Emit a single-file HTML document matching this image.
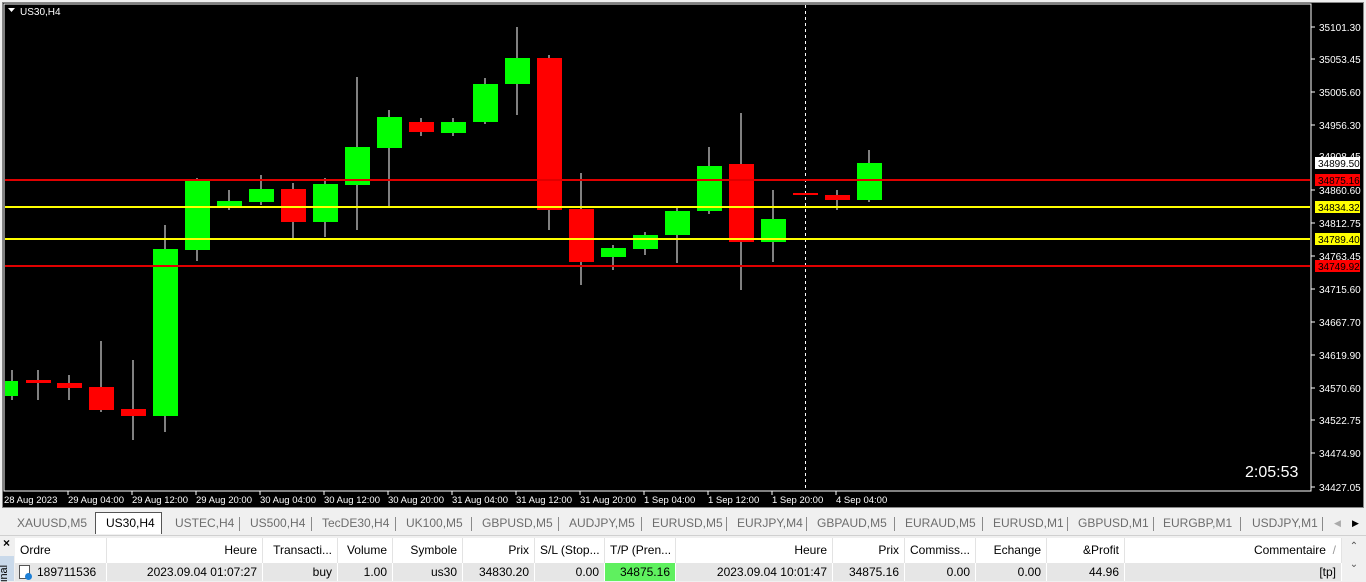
<!DOCTYPE html>
<html><head><meta charset="utf-8"><style>
*{margin:0;padding:0;box-sizing:border-box}
body{width:1366px;height:581px;overflow:hidden;background:#f0f0f0;font-family:"Liberation Sans",sans-serif;position:relative}
.abs{position:absolute}
.tab{position:absolute;top:516px;font-size:12px;color:#6d6d6d;white-space:nowrap}
.sep{position:absolute;top:517px;width:1px;height:14px;background:#8a8a8a}
.hd{position:absolute;top:538px;height:25px;background:#fff;border-right:1px solid #e3e3e3;font-size:12px;color:#000;line-height:24px;padding:0 5px;white-space:nowrap;overflow:hidden}
.cl{position:absolute;top:563px;height:18px;background:#e6e6e6;border-right:1px solid #fff;font-size:12px;color:#000;line-height:18px;padding:0 5px;white-space:nowrap;overflow:hidden}
.r{text-align:right}
</style></head><body>
<div class="abs" style="left:2px;top:2px;width:1362px;height:506px;background:#000;border:1px solid #888"></div>
<svg class="abs" style="left:0;top:0" width="1366" height="510" xmlns="http://www.w3.org/2000/svg">
<rect x="4" y="4" width="1307" height="487" fill="none" stroke="#fff" stroke-width="1"/>
<g fill="#fff" font-family="Liberation Sans" font-size="10">
<text x="20" y="15">US30,H4</text>
<path d="M8 8h7l-3.5 4z" fill="#fff"/>
</g>
<g stroke="#fff" stroke-width="1">
<line x1="805.5" y1="5" x2="805.5" y2="490" stroke-dasharray="3,3"/>
</g>
<g stroke="#fff" stroke-width="1" id="wicks">
<line x1="12" y1="370" x2="12" y2="400"/><line x1="38" y1="370" x2="38" y2="400"/><line x1="69" y1="375" x2="69" y2="400"/>
<line x1="101" y1="341" x2="101" y2="412"/><line x1="133" y1="360" x2="133" y2="440"/><line x1="165" y1="225" x2="165" y2="432"/>
<line x1="197" y1="178" x2="197" y2="261"/><line x1="229" y1="190" x2="229" y2="210"/><line x1="261" y1="175" x2="261" y2="205"/>
<line x1="293" y1="183" x2="293" y2="240"/><line x1="325" y1="178" x2="325" y2="237"/><line x1="357" y1="77" x2="357" y2="230"/>
<line x1="389" y1="110" x2="389" y2="207"/><line x1="421" y1="118" x2="421" y2="136"/><line x1="453" y1="118" x2="453" y2="136"/>
<line x1="485" y1="78" x2="485" y2="124"/><line x1="517" y1="27" x2="517" y2="115"/><line x1="549" y1="55" x2="549" y2="230"/>
<line x1="581" y1="173" x2="581" y2="285"/><line x1="613" y1="245" x2="613" y2="270"/><line x1="645" y1="232" x2="645" y2="255"/>
<line x1="677" y1="208" x2="677" y2="263"/><line x1="709" y1="147" x2="709" y2="214"/><line x1="741" y1="113" x2="741" y2="290"/>
<line x1="773" y1="190" x2="773" y2="262"/><line x1="837" y1="190" x2="837" y2="210"/><line x1="869" y1="150" x2="869" y2="202"/>
</g>
<g fill="#00ff00">
<rect x="5" y="381" width="13" height="15"/><rect x="153" y="249" width="25" height="167"/><rect x="185" y="181" width="25" height="69"/>
<rect x="217" y="201" width="25" height="6"/><rect x="249" y="189" width="25" height="13"/><rect x="313" y="184" width="25" height="38"/>
<rect x="345" y="147" width="25" height="38"/><rect x="377" y="117" width="25" height="31"/><rect x="441" y="122" width="25" height="11"/>
<rect x="473" y="84" width="25" height="38"/><rect x="505" y="58" width="25" height="26"/><rect x="601" y="248" width="25" height="9"/>
<rect x="633" y="235" width="25" height="14"/><rect x="665" y="211" width="25" height="24"/><rect x="697" y="166" width="25" height="45"/>
<rect x="761" y="219" width="25" height="23"/><rect x="857" y="163" width="25" height="37"/>
</g>
<g fill="#ff0000">
<rect x="26" y="380" width="25" height="3"/><rect x="57" y="383" width="25" height="5"/><rect x="89" y="387" width="25" height="23"/>
<rect x="121" y="409" width="25" height="7"/><rect x="281" y="189" width="25" height="33"/><rect x="409" y="122" width="25" height="10"/>
<rect x="537" y="58" width="25" height="152"/><rect x="569" y="209" width="25" height="53"/><rect x="729" y="164" width="25" height="78"/>
<rect x="793" y="193" width="25" height="2"/><rect x="825" y="195" width="25" height="5"/>
</g>
<g stroke-width="2">
<line x1="5" y1="180" x2="1310" y2="180" stroke="#e00000"/>
<line x1="5" y1="207" x2="1310" y2="207" stroke="#ffff00"/>
<line x1="5" y1="239" x2="1310" y2="239" stroke="#ffff00"/>
<line x1="5" y1="266" x2="1310" y2="266" stroke="#e00000"/>
</g>
<g stroke="#fff">
<line x1="1311" y1="27" x2="1315" y2="27"/><line x1="1311" y1="59" x2="1315" y2="59"/><line x1="1311" y1="92" x2="1315" y2="92"/>
<line x1="1311" y1="125" x2="1315" y2="125"/><line x1="1311" y1="190" x2="1315" y2="190"/><line x1="1311" y1="223" x2="1315" y2="223"/>
<line x1="1311" y1="256" x2="1315" y2="256"/><line x1="1311" y1="289" x2="1315" y2="289"/><line x1="1311" y1="322" x2="1315" y2="322"/>
<line x1="1311" y1="355" x2="1315" y2="355"/><line x1="1311" y1="388" x2="1315" y2="388"/><line x1="1311" y1="420" x2="1315" y2="420"/>
<line x1="1311" y1="453" x2="1315" y2="453"/><line x1="1311" y1="487" x2="1315" y2="487"/>
</g>
<g fill="#fff" font-family="Liberation Sans" font-size="10">
<text x="1319" y="31">35101.30</text><text x="1319" y="63">35053.45</text><text x="1319" y="96">35005.60</text>
<text x="1319" y="129">34956.30</text><text x="1319" y="160">34908.45</text><text x="1319" y="194">34860.60</text>
<text x="1319" y="227">34812.75</text><text x="1319" y="260">34763.45</text><text x="1319" y="293">34715.60</text>
<text x="1319" y="326">34667.70</text><text x="1319" y="359">34619.90</text><text x="1319" y="392">34570.60</text>
<text x="1319" y="424">34522.75</text><text x="1319" y="457">34474.90</text><text x="1319" y="491">34427.05</text>
</g>
<rect x="1315" y="157" width="45" height="12" fill="#fff"/>
<rect x="1315" y="174" width="45" height="12" fill="#ff0000"/>
<rect x="1315" y="201" width="45" height="12" fill="#ffff00"/>
<rect x="1315" y="233" width="45" height="12" fill="#ffff00"/>
<rect x="1315" y="260" width="45" height="12" fill="#ff0000"/>
<g font-family="Liberation Sans" font-size="10" fill="#000">
<text x="1318" y="167">34899.50</text><text x="1318" y="184">34875.16</text><text x="1318" y="211">34834.32</text>
<text x="1318" y="243">34789.40</text><text x="1318" y="270">34749.92</text>
</g>
<g stroke="#fff">
<line x1="68" y1="491" x2="68" y2="495"/><line x1="132" y1="491" x2="132" y2="495"/><line x1="196" y1="491" x2="196" y2="495"/>
<line x1="260" y1="491" x2="260" y2="495"/><line x1="324" y1="491" x2="324" y2="495"/><line x1="388" y1="491" x2="388" y2="495"/>
<line x1="452" y1="491" x2="452" y2="495"/><line x1="516" y1="491" x2="516" y2="495"/><line x1="580" y1="491" x2="580" y2="495"/>
<line x1="644" y1="491" x2="644" y2="495"/><line x1="708" y1="491" x2="708" y2="495"/><line x1="772" y1="491" x2="772" y2="495"/>
<line x1="836" y1="491" x2="836" y2="495"/>
</g>
<g fill="#fff" font-family="Liberation Sans" font-size="9.5">
<text x="4" y="503">28 Aug 2023</text><text x="68" y="503">29 Aug 04:00</text><text x="132" y="503">29 Aug 12:00</text>
<text x="196" y="503">29 Aug 20:00</text><text x="260" y="503">30 Aug 04:00</text><text x="324" y="503">30 Aug 12:00</text>
<text x="388" y="503">30 Aug 20:00</text><text x="452" y="503">31 Aug 04:00</text><text x="516" y="503">31 Aug 12:00</text>
<text x="580" y="503">31 Aug 20:00</text><text x="644" y="503">1 Sep 04:00</text><text x="708" y="503">1 Sep 12:00</text>
<text x="772" y="503">1 Sep 20:00</text><text x="836" y="503">4 Sep 04:00</text>
</g>
<text x="1245" y="477" fill="#fff" font-family="Liberation Sans" font-size="16">2:05:53</text>
</svg>
<div class="abs" style="left:95px;top:512px;width:67px;height:22px;background:#fff;border:1px solid #555;border-bottom:none"></div>
<div class="tab" style="left:17px">XAUUSD,M5</div>
<div class="tab" style="left:106px;color:#000">US30,H4</div>
<div class="tab" style="left:175px">USTEC,H4</div><div class="sep" style="left:239px"></div>
<div class="tab" style="left:250px">US500,H4</div><div class="sep" style="left:311px"></div>
<div class="tab" style="left:322px">TecDE30,H4</div><div class="sep" style="left:395px"></div>
<div class="tab" style="left:406px">UK100,M5</div><div class="sep" style="left:471px"></div>
<div class="tab" style="left:482px">GBPUSD,M5</div><div class="sep" style="left:558px"></div>
<div class="tab" style="left:569px">AUDJPY,M5</div><div class="sep" style="left:641px"></div>
<div class="tab" style="left:652px">EURUSD,M5</div><div class="sep" style="left:726px"></div>
<div class="tab" style="left:737px">EURJPY,M4</div><div class="sep" style="left:806px"></div>
<div class="tab" style="left:817px">GBPAUD,M5</div><div class="sep" style="left:894px"></div>
<div class="tab" style="left:905px">EURAUD,M5</div><div class="sep" style="left:982px"></div>
<div class="tab" style="left:993px">EURUSD,M1</div><div class="sep" style="left:1067px"></div>
<div class="tab" style="left:1078px">GBPUSD,M1</div><div class="sep" style="left:1153px"></div>
<div class="tab" style="left:1163px">EURGBP,M1</div><div class="sep" style="left:1240px"></div>
<div class="tab" style="left:1252px">USDJPY,M1</div><div class="sep" style="left:1322px"></div>
<div class="tab" style="left:1334px;font-size:9px;top:518px;color:#aaa">◀</div>
<div class="tab" style="left:1352px;font-size:9px;top:518px;color:#000">▶</div>
<div class="abs" style="left:0;top:535px;width:1366px;height:1px;background:#d0d0d0"></div>
<div class="abs" style="left:3px;top:536px;font-size:12px;font-weight:bold">×</div>
<div class="abs" style="left:0;top:556px;width:14px;height:25px;background:#c9d9ea"></div>
<div class="abs" style="left:-2px;top:560px;font-size:11px;transform:rotate(-90deg);transform-origin:left top;top:582px;color:#000">inal</div>
<div class="hd" style="left:15px;width:92px">Ordre</div>
<div class="hd r" style="left:107px;width:156px">Heure</div>
<div class="hd r" style="left:263px;width:75px">Transacti...</div>
<div class="hd r" style="left:338px;width:55px">Volume</div>
<div class="hd r" style="left:393px;width:70px">Symbole</div>
<div class="hd r" style="left:463px;width:72px">Prix</div>
<div class="hd r" style="left:535px;width:70px">S/L (Stop...</div>
<div class="hd r" style="left:605px;width:71px">T/P (Pren...</div>
<div class="hd r" style="left:676px;width:157px">Heure</div>
<div class="hd r" style="left:833px;width:72px">Prix</div>
<div class="hd r" style="left:905px;width:71px">Commiss...</div>
<div class="hd r" style="left:976px;width:71px">Echange</div>
<div class="hd r" style="left:1047px;width:78px">&amp;Profit</div>
<div class="hd r" style="left:1125px;width:217px">Commentaire &nbsp;<span style="color:#999">/</span></div>
<div class="cl" style="left:15px;width:92px;padding-left:22px">189711536</div>
<div class="abs" style="left:19px;top:565px;width:11px;height:14px;border:1px solid #555;background:#fff"></div>
<div class="abs" style="left:25px;top:573px;width:7px;height:7px;border-radius:50%;background:#1d7fd6"></div>
<div class="cl r" style="left:107px;width:156px">2023.09.04 01:07:27</div>
<div class="cl r" style="left:263px;width:75px">buy</div>
<div class="cl r" style="left:338px;width:55px">1.00</div>
<div class="cl r" style="left:393px;width:70px">us30</div>
<div class="cl r" style="left:463px;width:72px">34830.20</div>
<div class="cl r" style="left:535px;width:70px">0.00</div>
<div class="cl r" style="left:605px;width:71px;background:#5ff05f">34875.16</div>
<div class="cl r" style="left:676px;width:157px">2023.09.04 10:01:47</div>
<div class="cl r" style="left:833px;width:72px">34875.16</div>
<div class="cl r" style="left:905px;width:71px">0.00</div>
<div class="cl r" style="left:976px;width:71px">0.00</div>
<div class="cl r" style="left:1047px;width:78px">44.96</div>
<div class="cl r" style="left:1125px;width:217px">[tp]</div>
<div class="abs" style="left:1342px;top:538px;width:24px;height:43px;background:#f0f0f0;font-size:10px;color:#555;text-align:center;line-height:18px">⌃<br>⌄</div>
</body></html>
